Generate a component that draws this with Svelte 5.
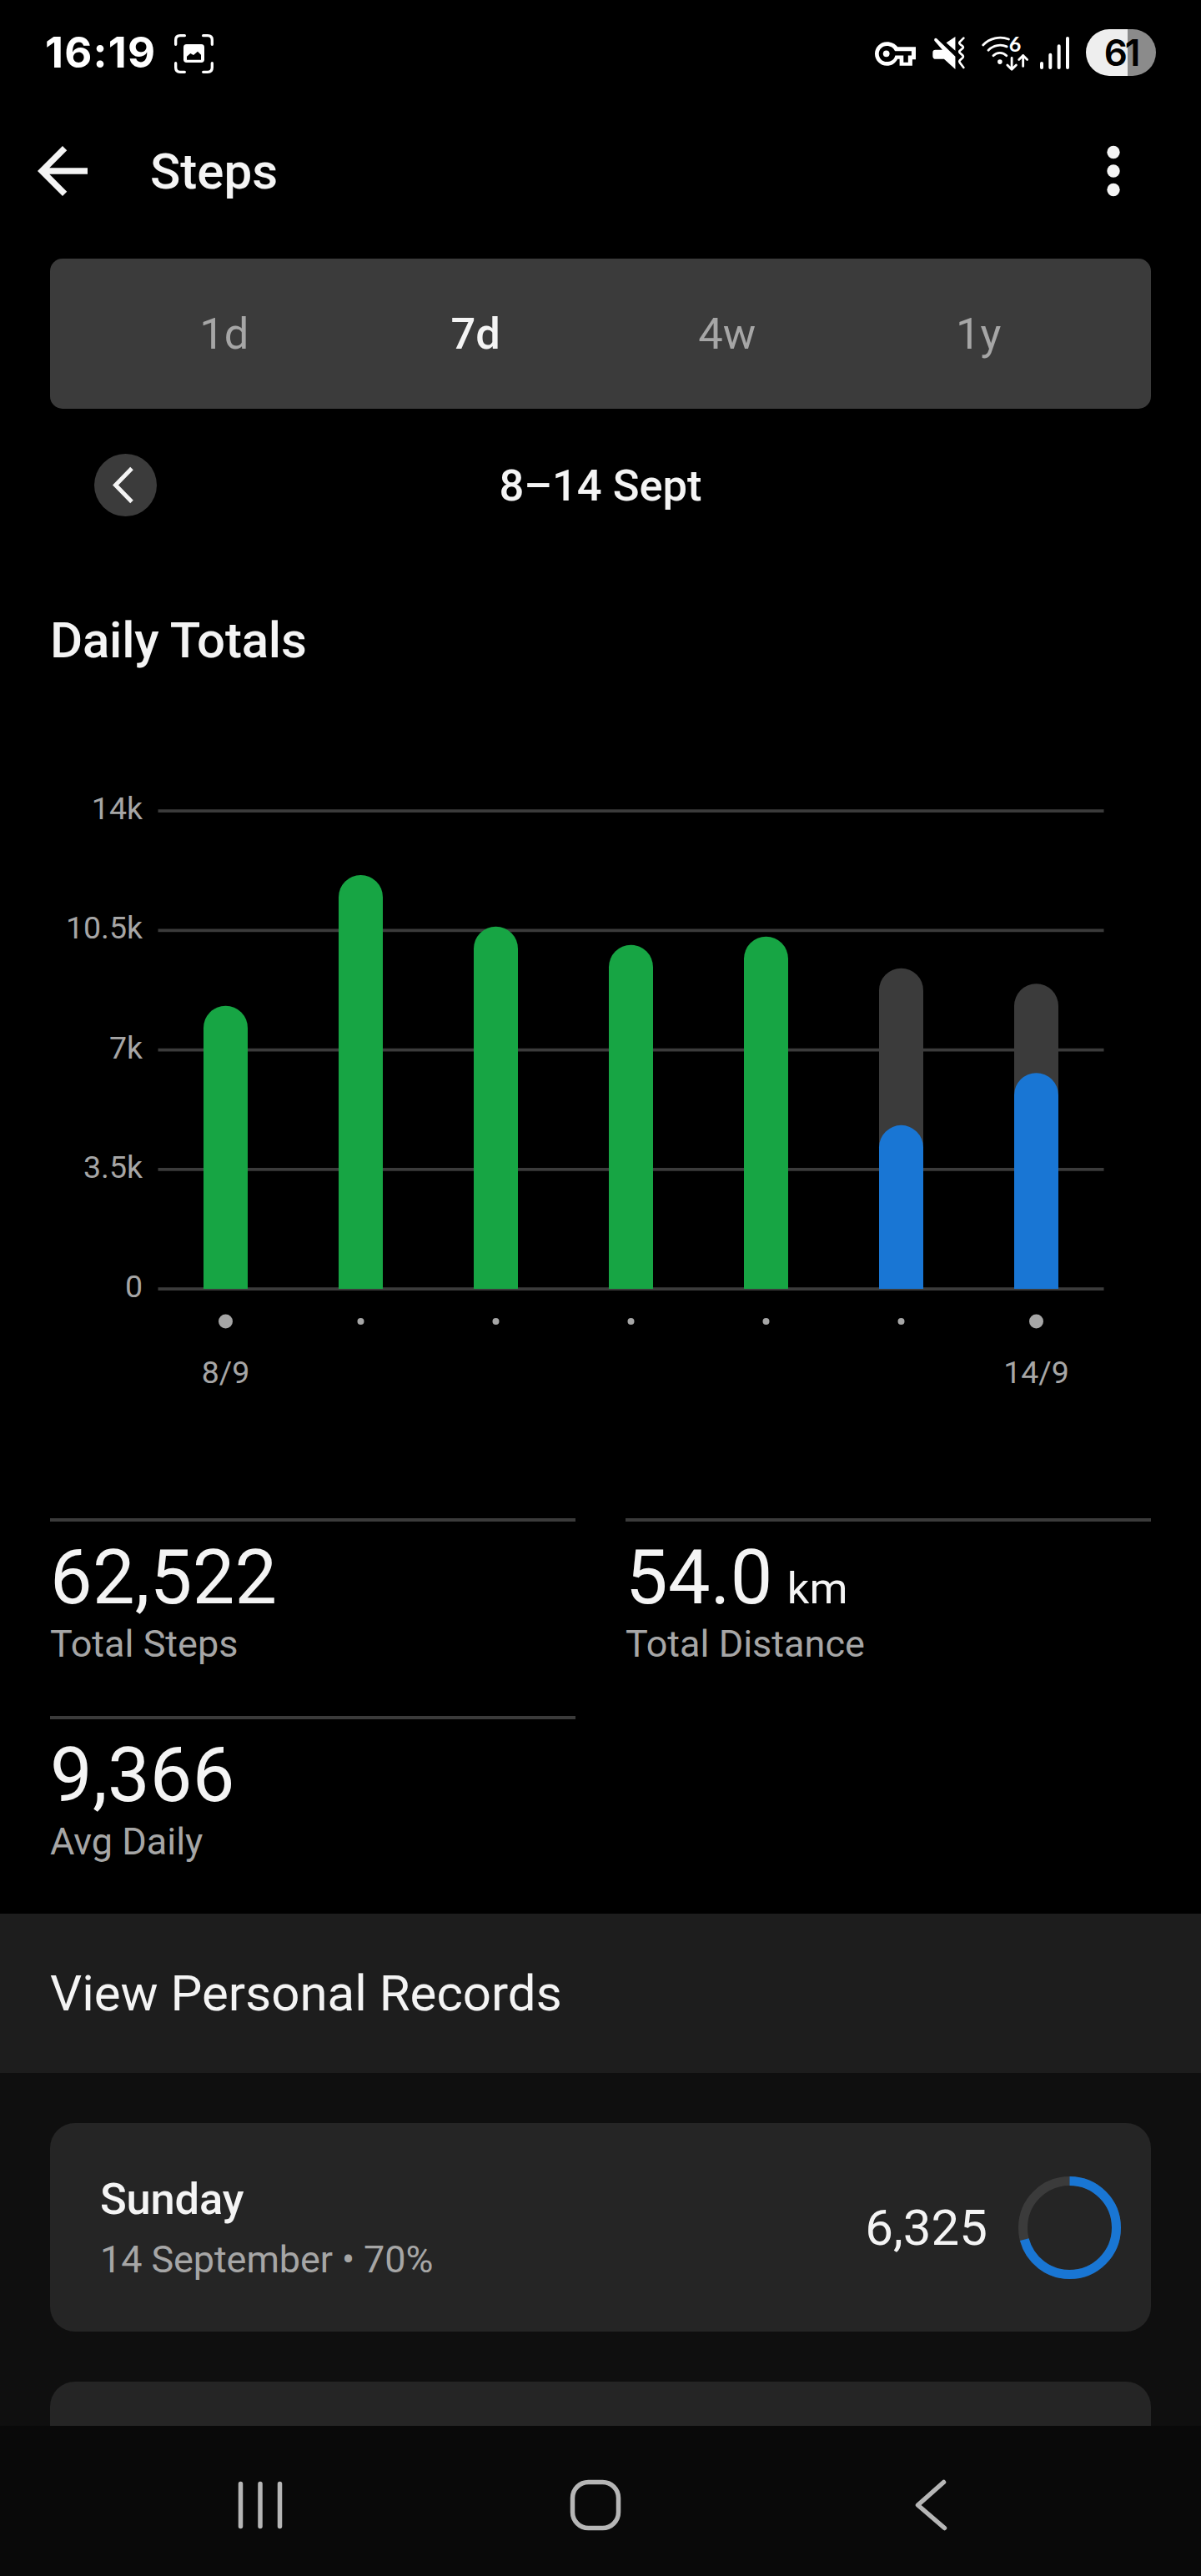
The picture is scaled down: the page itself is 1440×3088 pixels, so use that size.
<script>
  const ranges = ['1d', '7d', '4w', '1y'];
  let activeRange = $state('7d');

  const days = [
    { label: '8/9', steps: 8290 },
    { label: '', steps: 12120 },
    { label: '', steps: 10610 },
    { label: '', steps: 10070 },
    { label: '', steps: 10315 },
    { label: '', steps: 4792, goal: 9390 },
    { label: '14/9', steps: 6325, goal: 8935 }
  ];

  const ticks = [
    { value: 14000, label: '14k' },
    { value: 10500, label: '10.5k' },
    { value: 7000, label: '7k' },
    { value: 3500, label: '3.5k' },
    { value: 0, label: '0' }
  ];

  const stats = [
    { value: '62,522', unit: '', label: 'Total Steps' },
    { value: '54.0', unit: 'km', label: 'Total Distance' },
    { value: '9,366', unit: '', label: 'Avg Daily' }
  ];

  // chart geometry
  const left = 189.5;
  const right = 1323.5;
  const base = 645;
  const plotHeight = 573;
  const barWidth = 53;
  const slot = (right - left) / days.length;

  const y = (value) => base - (value / 14000) * plotHeight;
  const x = (i) => left + slot * (i + 0.5);

  function barPath(i, value) {
    const x0 = x(i) - barWidth / 2;
    const r = barWidth / 2;
    const top = y(value);
    return `M${x0} ${base}V${top + r}a${r} ${r} 0 0 1 ${barWidth} 0V${base}Z`;
  }

  const ringLength = 2 * Math.PI * 56;
  const ringShare = 0.708;
</script>

<div class="screen">
  <div class="status-bar">
    <span class="clock">16:19</span>
    <svg class="capture-icon" viewBox="0 0 141 141" aria-hidden="true">
      <path d="M5 37V21Q5 5 21 5H37M104 5H120Q136 5 136 21V37M136 104V120Q136 136 120 136H104M37 136H21Q5 136 5 120V104" fill="none" stroke="#fff" stroke-width="10" stroke-linecap="round" />
      <rect x="33" y="36" width="75" height="66" rx="11" fill="#fff" />
      <path d="M45 92V80L58 69L69 75L84 62L96 74V92Z" fill="#000" />
    </svg>

    <div class="status-icons">
      <svg class="key-icon" viewBox="0 5 24 14" aria-hidden="true">
        <path fill="#fff" fill-rule="evenodd" d="M22 19h-7.500v-4h-1.180c-1.140 2.420-3.600 4-6.320 4c-3.860 0-7-3.140-7-7s3.140-7 7-7c2.720 0 5.170 1.250 6.320 3H24v7.300h-2zM16.800 17h2.700v-4h2v-2.600H11.940l-.230-.070C11 8.340 9.110 7.300 7 7.300c-2.760 0-4.700 2.240-4.700 4.700s1.940 4.700 4.700 4.700c2.110 0 4.010-1.040 4.710-3.030l.230-.670h4.860z" />
        <circle cx="6.700" cy="11.900" r="1.900" fill="#fff" />
      </svg>
      <svg class="mute-icon" viewBox="0 0 118 118" aria-hidden="true">
        <path fill="#fff" d="M83 0V51L50 22ZM1 58Q1 48 11 48H36L7 14Q5 4 15 6L83 72V118L42 81H13Q1 81 1 70Z" />
        <path d="M113 5L99 19Q96 23 100 27L110 35Q113 38 110 42L99 51Q96 55 100 59L110 68Q113 72 110 76L99 86Q96 90 100 95L113 112" fill="none" stroke="#fff" stroke-width="8" stroke-linecap="round" />
      </svg>
      <svg class="wifi-icon" viewBox="0 0 169 127" aria-hidden="true">
        <g fill="none" stroke="#fff" stroke-width="8.500" stroke-linecap="round" stroke-linejoin="round">
          <path d="M5 33A87 87 0 0 1 98 12" />
          <path d="M24 52A60 60 0 0 1 91 39" />
          <path d="M42 72A33 33 0 0 1 90 72" />
          <path d="M109 80V121M93 106L109 122L125 106" />
          <path d="M150 110V71M135 86L150 71L165 86" />
        </g>
        <circle cx="66" cy="94" r="8.500" fill="#fff" />
        <text x="99" y="57" class="wifi-gen">6</text>
      </svg>
      <svg class="signal-icon" viewBox="0 0 111 117" aria-hidden="true">
        <path d="M6 96V111M37 65V111M68 34V111M99 6V111" stroke="#fff" stroke-width="12" stroke-linecap="round" />
      </svg>
      <span class="battery">61</span>
    </div>
  </div>

  <header class="app-bar">
    <button type="button" aria-label="Back">
      <svg viewBox="0 0 24 24" aria-hidden="true">
        <path d="M20 11v2H7.800l5.600 5.600L12 20l-8-8 8-8 1.400 1.400L7.800 11z" fill="#f4f4f4" />
      </svg>
    </button>
    <h1>Steps</h1>
    <button class="more" type="button" aria-label="More options">
      <svg viewBox="0 0 24 24" fill="#f4f4f4" aria-hidden="true">
        <circle cx="12" cy="6" r="2.050" />
        <circle cx="12" cy="12" r="2.050" />
        <circle cx="12" cy="18" r="2.050" />
      </svg>
    </button>
  </header>

  <div class="ranges">
    {#each ranges as range}
      <button type="button" class:active={range === activeRange} onclick={() => (activeRange = range)}>{range}</button>
    {/each}
  </div>

  <div class="period">
    <button class="prev" type="button" aria-label="Previous week">
      <svg viewBox="0 0 75 75" aria-hidden="true">
        <path d="M45 17.500L25.500 37.500L45 57.500" fill="none" stroke="#f4f4f4" stroke-width="5" />
      </svg>
    </button>
    <span>8–14 Sept</span>
  </div>

  <h2>Daily Totals</h2>

  <svg class="chart" viewBox="0 0 1440 800" width="1440" height="800">
    {#each ticks as tick}
      <rect x={left} y={y(tick.value) - 1.75} width={right - left} height="3.750" fill="#3b3b3b" />
      <text class="tick" x="171" y={y(tick.value) + 10}>{tick.label}</text>
    {/each}
    {#each days as day, i}
      {#if day.goal}
        <path d={barPath(i, day.goal)} fill="#3b3b3b" />
      {/if}
      <path d={barPath(i, day.steps)} fill={day.goal ? '#1976d4' : '#17a544'} />
      <circle cx={x(i)} cy="684" r={day.label ? 8.5 : 4} fill="#a6a6a6" />
      {#if day.label}
        <text class="day" x={x(i)} y="757.500">{day.label}</text>
      {/if}
    {/each}
  </svg>

  <div class="stats">
    {#each stats as stat}
      <div class="stat">
        <div class="value">{stat.value}{#if stat.unit}<span class="unit">{stat.unit}</span>{/if}</div>
        <div class="label">{stat.label}</div>
      </div>
    {/each}
  </div>

  <a class="records" href="./">View Personal Records</a>

  <div class="day-list">
    <div class="day-card">
      <div class="day-info">
        <div class="weekday">Sunday</div>
        <div class="date">14 September • 70%</div>
      </div>
      <span class="count">6,325</span>
      <svg class="ring" viewBox="0 0 123 123" fill="none" stroke-width="11" aria-hidden="true">
        <circle cx="61.500" cy="61.500" r="56" stroke="#3b3b3b" />
        <circle cx="61.500" cy="61.500" r="56" stroke="#1976d4" stroke-dasharray="{ringLength * ringShare} {ringLength}" transform="rotate(-90 61.500 61.500)" />
      </svg>
    </div>
    <div class="day-card"></div>
  </div>

  <nav class="nav-bar">
    <svg viewBox="0 0 64 64" aria-label="Recents">
      <path d="M8.500 6.500V57.500M32 6.500V57.500M55.500 6.500V57.500" />
    </svg>
    <svg viewBox="0 0 64 64" aria-label="Home">
      <rect x="4.500" y="4.500" width="55" height="55" rx="19" />
    </svg>
    <svg viewBox="0 0 64 64" aria-label="Back">
      <path d="M47.500 4.500L16.500 32L48.500 59.500" />
    </svg>
  </nav>
</div>

<style>
  :global(body) {
    background: #000;
  }

  .screen {
    display: flex;
    flex-direction: column;
    width: 1440px;
    height: 3088px;
    overflow: hidden;
    background: #000;
    color: #f4f4f4;
    font-family: Roboto, sans-serif;
  }

  button {
    padding: 0;
    border: none;
    background: none;
    color: inherit;
    font: inherit;
    cursor: pointer;
  }

  svg {
    display: block;
    flex: none;
  }

  .status-bar {
    display: flex;
    align-items: center;
    height: 126px;
    padding: 0 54px;
    color: #fff;
    font-family: Inter, sans-serif;
  }

  .clock {
    width: 155px;
    font-size: 51px;
    font-weight: 700;
    letter-spacing: 1.2px;
    line-height: 60px;
    white-space: nowrap;
  }

  .capture-icon {
    width: 47px;
    height: 47px;
    margin-top: 3px;
  }

  .status-icons {
    display: flex;
    align-items: center;
    margin-left: auto;
  }

  .key-icon {
    width: 49px;
    height: 29px;
    margin: 3px 20px 0 0;
  }

  .mute-icon {
    width: 39px;
    height: 39px;
    margin-right: 20px;
  }

  .wifi-icon {
    width: 56px;
    height: 42px;
    margin: 2px 14px 0 0;
    overflow: visible;
  }

  .wifi-gen {
    fill: #fff;
    font-family: Lato, sans-serif;
    font-size: 76px;
    font-weight: 700;
  }

  .signal-icon {
    width: 37px;
    height: 39px;
    margin-right: 18px;
  }

  .battery {
    width: 84px;
    height: 56px;
    border-radius: 28px;
    background: linear-gradient(to right, #eee 60%, #8b8b8b 60%);
    color: #000;
    font-size: 44px;
    font-weight: 600;
    letter-spacing: -3px;
    line-height: 56px;
    text-align: center;
  }

  .app-bar {
    display: flex;
    align-items: center;
    height: 158px;
    padding: 0 60px 0 30px;
  }

  .app-bar svg {
    width: 90px;
    height: 90px;
  }

  .more {
    margin-left: auto;
  }

  h1 {
    margin: 2px 0 0 60px;
    font-size: 60px;
    font-weight: 500;
    line-height: 72px;
  }

  .ranges {
    display: flex;
    height: 180px;
    margin: 26px 60px 0;
    padding: 0 56px 0 58px;
    box-sizing: border-box;
    border-radius: 15px;
    background: #3b3b3b;
    font-size: 52.5px;
  }

  .ranges button {
    flex: 1;
    color: #a6a6a6;
  }

  .ranges .active {
    color: #f4f4f4;
    font-weight: 500;
  }

  .period {
    display: grid;
    grid-template-columns: 75px 1fr 75px;
    align-items: center;
    height: 75px;
    margin: 54px 113px 0;
    font-size: 52.5px;
    font-weight: 500;
    text-align: center;
  }

  .period span {
    line-height: 60px;
  }

  .prev {
    width: 75px;
    height: 75px;
    border-radius: 50%;
    background: #3b3b3b;
  }

  h2 {
    margin: 113px 60px 0;
    font-size: 60px;
    font-weight: 500;
    letter-spacing: -0.2px;
    line-height: 71px;
  }

  .chart {
    margin-top: 97px;
  }

  .tick,
  .day {
    fill: #a6a6a6;
    font-size: 37.5px;
  }

  .tick {
    text-anchor: end;
  }

  .day {
    text-anchor: middle;
  }

  .stats {
    display: grid;
    grid-template-columns: 1fr 1fr;
    gap: 60px;
    margin: 120px 60px 60px;
  }

  .stat {
    padding-top: 15px;
    border-top: 4px solid #3b3b3b;
  }

  .value {
    font-size: 90px;
    letter-spacing: 0.3px;
    line-height: 106px;
  }

  .unit {
    margin-left: 17px;
    font-size: 52.5px;
    line-height: 1;
  }

  .label {
    color: #a6a6a6;
    font-size: 45px;
    line-height: 52px;
  }

  .records {
    padding-left: 60px;
    background: #1d1d1d;
    color: inherit;
    font-size: 60px;
    line-height: 191px;
    text-decoration: none;
  }

  .day-list {
    display: flex;
    flex-direction: column;
    gap: 60px;
    height: 423px;
    padding: 60px 60px 0;
    box-sizing: border-box;
    overflow: hidden;
    background: #0f0f0f;
  }

  .day-card {
    display: flex;
    flex: none;
    align-items: center;
    height: 250px;
    padding: 0 36px 0 60px;
    box-sizing: border-box;
    border-radius: 30px;
    background: #252525;
  }

  .day-info {
    flex: 1;
  }

  .weekday {
    font-size: 52.5px;
    font-weight: 500;
    letter-spacing: -0.2px;
    line-height: 76px;
  }

  .date {
    color: #a6a6a6;
    font-size: 45px;
    letter-spacing: -0.1px;
    line-height: 69px;
  }

  .count {
    margin-right: 37px;
    font-size: 60px;
  }

  .ring {
    width: 123px;
    height: 123px;
  }

  .nav-bar {
    display: flex;
    align-items: center;
    justify-content: space-between;
    height: 180px;
    padding: 10px 292px 0 279.5px;
    box-sizing: border-box;
    background: #090909;
  }

  .nav-bar svg {
    width: 64px;
    height: 64px;
    fill: none;
    stroke: #b6b6b6;
    stroke-width: 5.5;
    stroke-linecap: round;
    stroke-linejoin: round;
  }
</style>
